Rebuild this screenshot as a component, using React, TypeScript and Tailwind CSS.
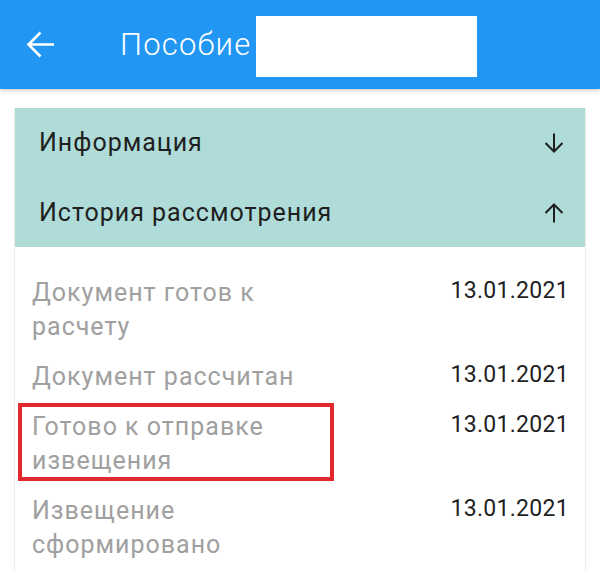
import React from 'react'

const history = [
  { label: 'Документ готов к расчету', date: '13.01.2021' },
  { label: 'Документ рассчитан', date: '13.01.2021' },
  { label: 'Готово к отправке извещения', date: '13.01.2021', marked: true },
  { label: 'Извещение сформировано', date: '13.01.2021' },
]

const ArrowBack = () => (
  <svg width="29" height="27" viewBox="0 0 29 27" fill="none" className="ml-[26px] shrink-0">
    <path d="M28 13.5H2.5M14.5 1.5L2.5 13.5L14.5 25.5" stroke="white" strokeWidth="2.6" />
  </svg>
)

const ArrowVertical = ({ up }: { up?: boolean }) => (
  <svg width="20" height="20" viewBox="0 0 20 20" fill="none" className={up ? 'rotate-180' : ''}>
    <path d="M10 0.5V18.5M1.5 10L10 18.5L18.5 10" stroke="#1f1f1f" strokeWidth="2" />
  </svg>
)

export default function App() {
  return (
    <div className="w-[600px] h-[583px] overflow-hidden bg-white font-['Roboto',sans-serif]">
      <header className="relative z-10 h-[89px] bg-[#2196f3] flex items-center shadow-[0_2px_4px_rgba(0,0,0,0.18)]">
        <ArrowBack />
        <span className="ml-[65px] text-[31px] tracking-[1.2px] font-light text-white leading-none">Пособие</span>
        <div className="ml-[5px] mt-[4px] w-[221px] h-[61px] bg-white" />
      </header>

      <main className="pt-[19px] px-[14px]">
        <div className="border-x border-[#ececec]">
          {/* Accordion headers */}
          <div className="bg-[#afdcd8] text-[#1f1f1f] text-[25px] tracking-[1px]">
            <div className="h-[70px] flex items-center justify-between pl-[24px] pr-[21px]">
              <span>Информация</span>
              <ArrowVertical />
            </div>
            <div className="h-[69px] flex items-center justify-between pl-[24px] pr-[21px]">
              <span>История рассмотрения</span>
              <ArrowVertical up />
            </div>
          </div>

          {/* History list */}
          <ul className="pt-[21px] pl-[17px] pr-[16px]">
            {history.map((item, i) => (
              <li key={i} className="flex items-start justify-between py-[8px]">
                <div className="relative w-[285px] text-[25px] tracking-[1px] leading-[34px] text-[#a0a0a0]">
                  {item.label}
                  {item.marked && (
                    <div className="absolute -left-[14px] -top-[7px] w-[316px] h-[78px] border-[4px] border-[#e0282d]" />
                  )}
                </div>
                <span className="text-[23px] tracking-[0.3px] leading-[30px] text-[#1f1f1f]">{item.date}</span>
              </li>
            ))}
          </ul>
        </div>
      </main>
    </div>
  )
}
